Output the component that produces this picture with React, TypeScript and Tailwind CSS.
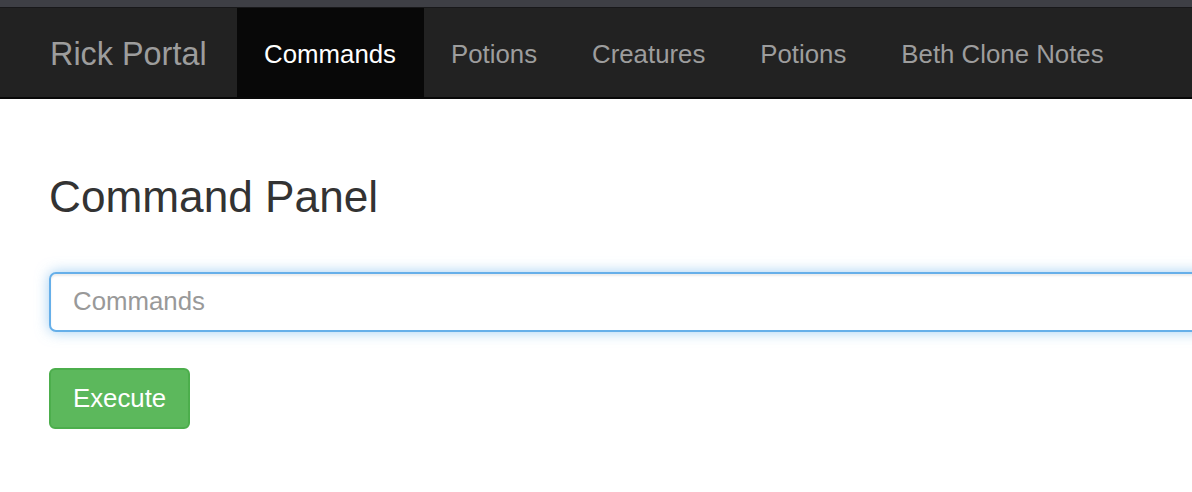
import React from "react";

const NAV_ITEMS = ["Commands", "Potions", "Creatures", "Potions", "Beth Clone Notes"];

export default function App() {
  return (
    <div
      className="min-h-[492px] w-full overflow-hidden bg-white"
      style={{ fontFamily: '"Liberation Sans", Arial, sans-serif' }}
    >
      <div className="h-[8px] border-b border-[#18181a] bg-[#3e3f45]" />

      <nav className="flex h-[91px] items-stretch border-b-2 border-[#080808] bg-[#222222]">
        <a className="flex items-center pt-[3px] pl-[50px] pr-[30px] text-[32.4px] leading-[36px] text-[#9d9d9d]">
          Rick Portal
        </a>
        <ul className="flex items-stretch">
          {NAV_ITEMS.map((label, i) => (
            <li
              key={i}
              className={
                i === 0
                  ? "flex items-center bg-[#080808] px-[27.5px] pt-[3px] text-[25.8px] leading-[36px] text-white"
                  : "flex items-center px-[27.5px] pt-[3px] text-[25.8px] leading-[36px] text-[#9d9d9d]"
              }
            >
              {label}
            </li>
          ))}
        </ul>
      </nav>

      <main className="pl-[49px]">
        <h3 className="mt-[74px] text-[44.2px] leading-[47.5px] text-[#333333]">Command Panel</h3>

        <input
          type="text"
          placeholder="Commands"
          className="mt-[51px] block h-[60px] w-[1300px] rounded-[7px] border-2 border-[#66afe9] bg-white px-[22px] text-[25.8px] text-[#555555] shadow-[inset_0_2px_2px_rgba(0,0,0,0.075),0_0_14px_rgba(102,175,233,0.6)] outline-none placeholder:text-[#999999]"
        />

        <button
          type="button"
          className="mt-[36px] flex h-[61px] items-center rounded-[6px] border-2 border-[#4cae4c] bg-[#5cb85c] px-[22px] text-[25.8px] text-white"
        >
          Execute
        </button>
      </main>
    </div>
  );
}
